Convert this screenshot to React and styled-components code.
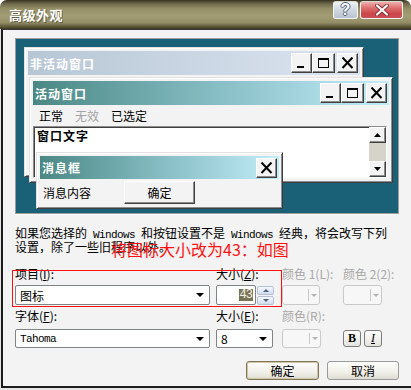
import React from "react";
import styled, { createGlobalStyle } from "styled-components";

const GlobalStyle = createGlobalStyle`
  html, body {
    margin: 0;
    padding: 0;
    background: #ffffff;
  }
  body {
    font-family: "Noto Sans CJK SC", "Liberation Sans", sans-serif;
    font-size: 12px;
    color: #000;
  }
  * {
    box-sizing: border-box;
  }
`;

const Dialog = styled.div`
  width: 411px;
  height: 390px;
  display: flex;
  flex-direction: column;
  background: #dedcd2;
  border-radius: 7px 7px 0 0;
  overflow: hidden;
`;

const TitleBar = styled.div`
  height: 29px;
  flex: none;
  display: flex;
  align-items: flex-start;
  padding: 0 8px 0 9px;
  background: linear-gradient(
    to bottom,
    #35311f 0%,
    #6c674a 12%,
    #958f68 30%,
    #a39e75 55%,
    #938d66 78%,
    #5c5739 92%,
    #3a3623 100%
  );
`;

const TitleText = styled.div`
  margin-top: 7px;
  color: #fff;
  font-weight: bold;
  font-size: 13px;
  line-height: 16px;
  letter-spacing: 0.5px;
  text-shadow: 1px 1px 0 rgba(40, 36, 20, 0.5);
`;

const TitleButtons = styled.div`
  margin-left: auto;
  margin-top: 1px;
  display: flex;
  gap: 2px;
`;

const CapButton = styled.div`
  width: ${(p) => p.$w}px;
  height: 18px;
  border: 1px solid #f4f4f0;
  border-top-color: #d8d8d0;
  border-radius: 3px;
  display: flex;
  align-items: center;
  justify-content: center;
  background: ${(p) =>
    p.$danger
      ? "linear-gradient(to bottom, #eeb0ae 0%, #dc6c6c 40%, #cc4548 75%, #c9535a 100%)"
      : "linear-gradient(to bottom, #f0f3f6 0%, #d3dae3 45%, #b9c4d2 100%)"};
  color: #fff;
  font-family: "Liberation Sans", sans-serif;
  font-weight: bold;
  font-size: 16px;
  line-height: 16px;
  text-shadow: -1px 0 #56647a, 1px 0 #56647a, 0 -1px #56647a, 0 1px #56647a;
`;

const Frame = styled.div`
  flex: 1;
  display: flex;
  padding: 0 2px 2px 1px;
  background: #e4e4e4;
`;

const Body = styled.div`
  position: relative;
  flex: 1;
  display: flex;
  flex-direction: column;
  padding: 8px 25px 0 12px;
  background: #f3f3f3;
  border: 2px solid #1c1c1c;
  border-top: 1px solid #3a3a3a;
`;

/* ---------- preview desktop ---------- */

const Preview = styled.div`
  position: relative;
  width: 384px;
  height: 176px;
  flex: none;
  background: #1a6178;
  border: 1px solid #9c9c9c;
  box-shadow: 0 1px 0 #ffffff;
`;

const Win = styled.div`
  position: absolute;
  left: ${(p) => p.$left}px;
  top: ${(p) => p.$top}px;
  width: ${(p) => p.$w}px;
  height: ${(p) => p.$h}px;
  display: flex;
  flex-direction: column;
  padding: 3px;
  background: #f3f3f3;
  border: 1px solid;
  border-color: #e2e2e2 #3c3c3c #3c3c3c #e2e2e2;
  box-shadow: inset 1px 1px #ffffff, inset -1px -1px #8c8c8c;
`;

const WinTitle = styled.div`
  height: ${(p) => p.$h}px;
  flex: none;
  display: flex;
  align-items: center;
  padding: 0 2px 0 2px;
  background: ${(p) =>
    p.$active
      ? "linear-gradient(to right, #4b8884 0%, #7fb7bd 45%, #c2edf9 100%)"
      : "linear-gradient(to right, #b7c6d5 0%, #cad6e3 50%, #dbe5f0 100%)"};
  color: #fff;
  font-weight: bold;
  font-size: 12px;
  letter-spacing: 1px;
`;

const WinButtons = styled.div`
  margin-left: auto;
  display: flex;
  gap: ${(p) => p.$gap || 0}px;
`;

const WinButton = styled.div`
  width: ${(p) => p.$w || 21}px;
  height: 20px;
  display: flex;
  align-items: center;
  justify-content: center;
  background: #f3f3f3;
  border: 1px solid;
  border-color: #ffffff #404040 #404040 #ffffff;
  box-shadow: inset -1px -1px #8c8c8c;
  margin-left: ${(p) => p.$ml || 0}px;
`;

const MenuBar = styled.div`
  height: 21px;
  flex: none;
  display: flex;
  align-items: center;
`;

const MenuItem = styled.span`
  padding: 0 6px;
  line-height: 21px;
  color: ${(p) => (p.$disabled ? "#a3a3a3" : "#000")};
`;

const TextPane = styled.div`
  flex: 1;
  display: flex;
  margin: 0 2px 1px 0;
  background: #fff;
  border: 1px solid;
  border-color: #8c8c8c #ffffff #ffffff #8c8c8c;
  box-shadow: inset 1px 1px #404040;
`;

const PaneText = styled.div`
  flex: 1;
  padding: 2px 3px;
  font-weight: bold;
  letter-spacing: 1px;
  line-height: 14px;
`;

const ScrollBar = styled.div`
  width: 17px;
  display: flex;
  flex-direction: column;
  background: #d6d3cb;
`;

const ScrollButton = styled.div`
  height: 16px;
  display: flex;
  align-items: center;
  justify-content: center;
  background: #f3f3f3;
  border: 1px solid;
  border-color: #ffffff #404040 #404040 #ffffff;
  box-shadow: inset -1px -1px #8c8c8c;
  margin-top: ${(p) => (p.$bottom ? "auto" : "0")};
`;

const MsgRow = styled.div`
  flex: 1;
  display: flex;
  align-items: center;
  padding-left: 3px;
`;

const ClassicButton = styled.div`
  width: 71px;
  height: 23px;
  margin-left: 33px;
  display: flex;
  align-items: center;
  justify-content: center;
  background: #f3f3f3;
  border: 1px solid;
  border-color: #ffffff #404040 #404040 #ffffff;
  box-shadow: inset -1px -1px #8c8c8c;
`;

/* ---------- form ---------- */

const Description = styled.div`
  margin-top: 13px;
  line-height: 12px;
  white-space: pre;
`;

const Latin = styled.span`
  font-family: "Liberation Mono", monospace;
  font-size: 11px;
  letter-spacing: -0.6px;
`;

const FieldGrid = styled.div`
  display: grid;
  grid-template-columns: 201px 66px 61px 39px;
  margin-top: ${(p) => p.$mt}px;
`;

const Field = styled.div`
  display: flex;
  flex-direction: column;
  align-items: flex-start;
  gap: ${(p) => p.$gap}px;
`;

const Label = styled.div`
  line-height: 12px;
  white-space: nowrap;
  color: ${(p) => (p.$disabled ? "#a8a8a8" : "#000")};
`;

const Combo = styled.div`
  width: ${(p) => p.$w}px;
  height: ${(p) => p.$h}px;
  display: flex;
  align-items: center;
  padding-left: 4px;
  background: #fff;
  border: 1px solid #7f8487;
  border-radius: 2px;
`;

const DownArrow = styled.span`
  margin-left: auto;
  margin-right: 5px;
  width: 0;
  height: 0;
  border-left: 4px solid transparent;
  border-right: 4px solid transparent;
  border-top: 4px solid #000;
`;

const DisabledCombo = styled.div`
  width: ${(p) => p.$w}px;
  height: ${(p) => p.$h}px;
  display: flex;
  justify-content: flex-end;
  background: #f7f7f7;
  border: 1px solid #c9c9c9;
  border-radius: 3px;
`;

const DisabledDrop = styled.div`
  width: 11px;
  margin: 3px 0;
  display: flex;
  align-items: center;
  justify-content: center;
  border-left: 1px solid #c9c9c9;
  &::after {
    content: "";
    border-left: 3px solid transparent;
    border-right: 3px solid transparent;
    border-top: 3px solid #b3b3b3;
  }
`;

const SpinWrap = styled.div`
  display: flex;
  gap: 1px;
  height: 20px;
`;

const SpinInput = styled.div`
  width: 40px;
  display: flex;
  align-items: center;
  justify-content: flex-end;
  padding-right: 2px;
  background: #fff;
  border: 1px solid #7f8487;
  border-radius: 2px;
`;

const Selected = styled.span`
  background: #7b7454;
  color: #f4f2e8;
  line-height: 12px;
  padding: 0 1px;
  font-family: "Liberation Mono", monospace;
  font-size: 12px;
  letter-spacing: -1px;
`;

const SpinButtons = styled.div`
  width: 17px;
  display: flex;
  flex-direction: column;
  gap: 1px;
  padding-top: 1px;
`;

const SpinButton = styled.div`
  flex: 1;
  display: flex;
  align-items: center;
  justify-content: center;
  background: linear-gradient(to bottom, #f6f8fc, #d3dcec);
  border: 1px solid #b4c1d6;
  border-radius: 2px;
`;

const Arrow = styled.span`
  width: 0;
  height: 0;
  border-left: 3px solid transparent;
  border-right: 3px solid transparent;
  ${(p) =>
    p.$up ? "border-bottom: 3px solid #4d6185;" : "border-top: 3px solid #4d6185;"}
`;

const StyleButtons = styled.div`
  display: flex;
  gap: 3px;
  height: 19px;
  align-items: center;
`;

const StyleButton = styled.div`
  width: 18px;
  height: 17px;
  display: flex;
  align-items: center;
  justify-content: center;
  border: 1px solid #7b7b7b;
  border-radius: 3px;
  background: linear-gradient(to bottom, #ffffff, #e4e3dd);
  font-family: "Liberation Serif", serif;
  font-size: 12px;
  font-weight: ${(p) => (p.$italic ? "normal" : "bold")};
  font-style: ${(p) => (p.$italic ? "italic" : "normal")};
`;

const ButtonRow = styled.div`
  margin-top: 13px;
  display: flex;
  justify-content: flex-end;
  gap: 8px;
`;

const PushButton = styled.div`
  width: ${(p) => p.$w}px;
  height: 19px;
  display: flex;
  align-items: center;
  justify-content: center;
  border-radius: 3px;
  border: 1px solid ${(p) => (p.$default ? "#7f7656" : "#9a9a9a")};
  box-shadow: ${(p) => (p.$default ? "inset 0 0 0 1px #cfc7a6" : "none")};
  background: linear-gradient(to bottom, #fdfdfb 0%, #f1f0ea 60%, #dedcd2 100%);
`;

/* ---------- annotation overlay ---------- */

const RedBox = styled.div`
  position: absolute;
  left: 9px;
  top: 240px;
  width: 270px;
  height: 37px;
  border: 1px solid #ff1010;
`;

const RedNote = styled.div`
  position: absolute;
  left: 108px;
  top: 211px;
  color: #ff1010;
  font-size: 16px;
  line-height: 16px;
  white-space: nowrap;
`;

const MinGlyph = () => (
  <svg width="13" height="12" viewBox="0 0 13 12">
    <rect x="2" y="9" width="7" height="2" fill="#000" />
  </svg>
);

const MaxGlyph = () => (
  <svg width="13" height="12" viewBox="0 0 13 12">
    <rect x="1.5" y="1.5" width="10" height="9" fill="none" stroke="#000" />
    <rect x="1" y="1" width="11" height="2" fill="#000" />
  </svg>
);

const CloseGlyph = () => (
  <svg width="13" height="12" viewBox="0 0 13 12">
    <path d="M1.5 0.5 L11.5 11 M11.5 0.5 L1.5 11" stroke="#000" strokeWidth="2" />
  </svg>
);

const ScrollArrow = ({ up }) => (
  <svg width="7" height="4" viewBox="0 0 7 4">
    <path d={up ? "M0 4 L3.5 0 L7 4 Z" : "M0 0 L3.5 4 L7 0 Z"} fill="#000" />
  </svg>
);

const TitleClose = () => (
  <svg width="14" height="12" viewBox="0 0 14 12">
    <path d="M2 1.5 L12 10.5 M12 1.5 L2 10.5" stroke="#8a3236" strokeWidth="4" strokeLinecap="round" />
    <path d="M2 1.5 L12 10.5 M12 1.5 L2 10.5" stroke="#fff" strokeWidth="2.2" strokeLinecap="round" />
  </svg>
);

function CaptionButtons({ onlyClose }) {
  if (onlyClose) {
    return (
      <WinButtons>
        <WinButton>
          <CloseGlyph />
        </WinButton>
      </WinButtons>
    );
  }
  return (
    <WinButtons>
      <WinButton>
        <MinGlyph />
      </WinButton>
      <WinButton $w={23}>
        <MaxGlyph />
      </WinButton>
      <WinButton $ml={2}>
        <CloseGlyph />
      </WinButton>
    </WinButtons>
  );
}

export default function App() {
  return (
    <>
      <GlobalStyle />
      <Dialog>
        <TitleBar>
          <TitleText>高级外观</TitleText>
          <TitleButtons>
            <CapButton $w={25}>?</CapButton>
            <CapButton $w={43} $danger>
              <TitleClose />
            </CapButton>
          </TitleButtons>
        </TitleBar>
        <Frame>
          <Body>
            <Preview>
              <Win $left={8} $top={8} $w={340} $h={130}>
                <WinTitle $h={24}>
                  非活动窗口
                  <CaptionButtons />
                </WinTitle>
              </Win>
              <Win $left={13} $top={38} $w={364} $h={106}>
                <WinTitle $h={24} $active>
                  活动窗口
                  <CaptionButtons />
                </WinTitle>
                <MenuBar>
                  <MenuItem>正常</MenuItem>
                  <MenuItem $disabled>无效</MenuItem>
                  <MenuItem>已选定</MenuItem>
                </MenuBar>
                <TextPane>
                  <PaneText>窗口文字</PaneText>
                  <ScrollBar>
                    <ScrollButton>
                      <ScrollArrow up />
                    </ScrollButton>
                    <ScrollButton $bottom>
                      <ScrollArrow />
                    </ScrollButton>
                  </ScrollBar>
                </TextPane>
              </Win>
              <Win $left={20} $top={113} $w={247} $h={57}>
                <WinTitle $h={23} $active>
                  消息框
                  <CaptionButtons onlyClose />
                </WinTitle>
                <MsgRow>
                  消息内容
                  <ClassicButton>确定</ClassicButton>
                </MsgRow>
              </Win>
            </Preview>

            <Description>
              如果您选择的<Latin> Windows </Latin>和按钮设置不是<Latin> Windows </Latin>经典，将会改写下列
              {"\n"}设置，除了一些旧程序以外。
            </Description>

            <FieldGrid $mt={15}>
              <Field $gap={5}>
                <Label>
                  项目(<u>I</u>):
                </Label>
                <Combo $w={195} $h={20}>
                  图标
                  <DownArrow />
                </Combo>
              </Field>
              <Field $gap={5}>
                <Label>
                  大小(<u>Z</u>):
                </Label>
                <SpinWrap>
                  <SpinInput>
                    <Selected>43</Selected>
                  </SpinInput>
                  <SpinButtons>
                    <SpinButton>
                      <Arrow $up />
                    </SpinButton>
                    <SpinButton>
                      <Arrow />
                    </SpinButton>
                  </SpinButtons>
                </SpinWrap>
              </Field>
              <Field $gap={5}>
                <Label $disabled>颜色 1(L):</Label>
                <DisabledCombo $w={38} $h={20}>
                  <DisabledDrop />
                </DisabledCombo>
              </Field>
              <Field $gap={5}>
                <Label $disabled>颜色 2(2):</Label>
                <DisabledCombo $w={39} $h={20}>
                  <DisabledDrop />
                </DisabledCombo>
              </Field>
            </FieldGrid>

            <FieldGrid $mt={5}>
              <Field $gap={7}>
                <Label>
                  字体(<u>F</u>):
                </Label>
                <Combo $w={195} $h={19}>
                  <Latin>Tahoma</Latin>
                  <DownArrow />
                </Combo>
              </Field>
              <Field $gap={7}>
                <Label>
                  大小(<u>E</u>):
                </Label>
                <Combo $w={57} $h={19}>
                  8
                  <DownArrow />
                </Combo>
              </Field>
              <Field $gap={7}>
                <Label $disabled>颜色(R):</Label>
                <DisabledCombo $w={39} $h={19}>
                  <DisabledDrop />
                </DisabledCombo>
              </Field>
              <Field $gap={7}>
                <Label>&nbsp;</Label>
                <StyleButtons>
                  <StyleButton>B</StyleButton>
                  <StyleButton $italic>
                    <u>I</u>
                  </StyleButton>
                </StyleButtons>
              </Field>
            </FieldGrid>

            <ButtonRow>
              <PushButton $w={73} $default>
                确定
              </PushButton>
              <PushButton $w={72}>取消</PushButton>
            </ButtonRow>

            <RedBox />
            <RedNote>将图标大小改为43：如图</RedNote>
          </Body>
        </Frame>
      </Dialog>
    </>
  );
}
